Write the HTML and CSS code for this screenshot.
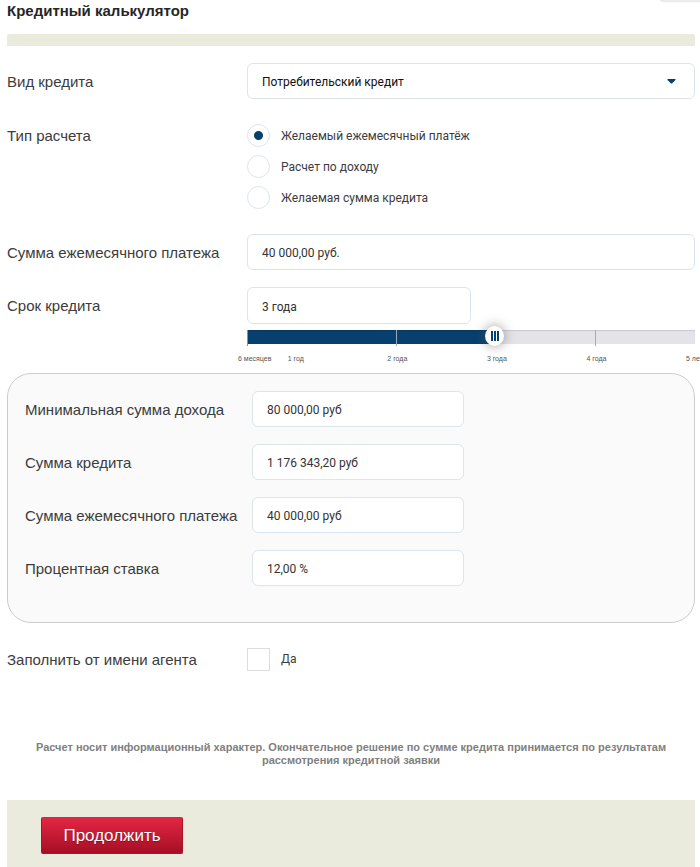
FILE: index.html
```html
<!DOCTYPE html>
<html lang="ru">
<head>
<meta charset="utf-8">
<meta name="viewport" content="width=device-width, initial-scale=1">
<title>Кредитный калькулятор</title>
<link rel="stylesheet" href="styles.css">
</head>
<body>
<div class="floating-edge"></div>
<form class="calculator">
  <h1 class="title">Кредитный калькулятор</h1>
  <div class="strip"></div>

  <div class="row row-kind">
    <label class="label" for="kind">Вид кредита</label>
    <div class="select-wrap">
      <select class="field" id="kind"><option>Потребительский кредит</option></select>
      <svg class="arrow" viewBox="0 0 8 5" aria-hidden="true"><path d="M0 0h8v1L4.500 4.500h-1L0 1z"/></svg>
    </div>
  </div>

  <div class="row row-type" role="radiogroup" aria-labelledby="type-label">
    <span class="label" id="type-label">Тип расчета</span>
    <div class="radios">
      <label class="choice"><input class="radio" type="radio" name="type" checked><span>Желаемый ежемесячный платёж</span></label>
      <label class="choice"><input class="radio" type="radio" name="type"><span>Расчет по доходу</span></label>
      <label class="choice"><input class="radio" type="radio" name="type"><span>Желаемая сумма кредита</span></label>
    </div>
  </div>

  <div class="row row-payment">
    <label class="label" for="payment">Сумма ежемесячного платежа</label>
    <input class="field" id="payment" type="text" value="40 000,00 руб.">
  </div>

  <div class="row row-term">
    <label class="label" for="term">Срок кредита</label>
    <div>
      <input class="field field-half" id="term" type="text" value="3 года">
      <div class="slider">
        <input class="range" type="range" min="6" max="60" value="36" aria-label="Срок кредита в месяцах">
        <div class="ticks"><i class="tick tick-start"></i><i class="tick tick-light"></i><i></i><i class="tick"></i></div>
        <svg class="grip" viewBox="0 0 8 10" aria-hidden="true"><path d="M0 0h2v10H0zM3 0h2v10H3zM6 0h2v10H6z"/></svg>
      </div>
      <div class="scale"><span>6 месяцев</span><span>1 год</span><span>2 года</span><span>3 года</span><span>4 года</span><span>5 лет</span></div>
    </div>
  </div>

  <section class="results">
    <div class="result"><label class="label" for="income">Минимальная сумма дохода</label><input class="field" id="income" type="text" value="80 000,00 руб" readonly></div>
    <div class="result"><label class="label" for="amount">Сумма кредита</label><input class="field" id="amount" type="text" value="1 176 343,20 руб" readonly></div>
    <div class="result"><label class="label" for="monthly">Сумма ежемесячного платежа</label><input class="field" id="monthly" type="text" value="40 000,00 руб" readonly></div>
    <div class="result"><label class="label" for="rate">Процентная ставка</label><input class="field" id="rate" type="text" value="12,00 %" readonly></div>
  </section>

  <div class="row row-agent">
    <span class="label" id="agent-label">Заполнить от имени агента</span>
    <label class="choice"><input class="checkbox" type="checkbox" aria-describedby="agent-label"><span>Да</span></label>
  </div>

  <p class="note">Расчет носит информационный характер. Окончательное решение по сумме кредита принимается по результатам рассмотрения кредитной заявки</p>

  <footer class="footer"><button class="submit" type="button">Продолжить</button></footer>
</form>
</body>
</html>
```
FILE: styles.css
```css
* { box-sizing: border-box; }

body {
  margin: 0;
  overflow-x: hidden;
  background: #fff;
  color: #3c3c3c;
  font-family: "Liberation Sans", Arial, sans-serif;
  font-size: 15px;
}

.floating-edge {
  position: absolute;
  top: -8px;
  right: -8px;
  width: 48px;
  height: 9px;
  border-radius: 4px;
  background: #eee;
  box-shadow: 0 0 2px #aaa;
}

.calculator { padding: 0 5px 0 7px; }

.title {
  margin: 0;
  padding-top: 2px;
  height: 34px;
  color: #262626;
  font-size: 15px;
  line-height: 18px;
}

.strip {
  height: 12px;
  border-radius: 3px 3px 0 0;
  background: #eaebdd;
}

.row {
  display: grid;
  grid-template-columns: 240px minmax(0, 1fr);
}

.label {
  height: 36px;
  line-height: 38px;
}

.row-kind { margin-top: 17px; }
.row-type { margin-top: 18px; }
.row-payment { margin-top: 18px; }
.row-term { margin-top: 17px; }

.field {
  display: block;
  width: 100%;
  height: 36px;
  margin: 0;
  padding: 2px 14px 0;
  border: 1px solid #dce4ec;
  border-radius: 6px;
  outline: 0;
  background: #fff;
  color: #333;
  font-family: Roboto, sans-serif;
  font-size: 12px;
}

.field-half { width: 50%; height: 37px; }

.select-wrap { position: relative; }
select.field { appearance: none; color: #111; }
.arrow {
  position: absolute;
  top: 16px;
  right: 19px;
  width: 9px;
  height: 5px;
  fill: #07406e;
  pointer-events: none;
}

.radios {
  display: grid;
  gap: 8px;
  padding: 7px 0;
}

.choice {
  display: flex;
  align-items: center;
  gap: 11px;
  font-family: Roboto, sans-serif;
  font-size: 12px;
}

.radio, .checkbox {
  appearance: none;
  width: 23px;
  height: 23px;
  margin: 0;
  border: 1px solid #dce4ec;
  background: #fff;
}
.radio { border-radius: 50%; }
.radio:checked { background: radial-gradient(circle, #07406e 4px, transparent 5px); }
.checkbox { border-color: #ddd; }
.checkbox:checked { background: #07406e; }

.slider {
  position: relative;
  height: 14px;
  margin-top: 6px;
}

.range {
  appearance: none;
  display: block;
  width: 100%;
  height: 14px;
  margin: 0;
  background: linear-gradient(90deg, #07406e 55%, #e4e3e8 55%);
  box-shadow: inset 0 1px 1px rgba(0, 0, 0, .12);
}
.range::-webkit-slider-thumb {
  appearance: none;
  width: 19px;
  height: 20px;
  margin-top: -2px;
  border-radius: 50%;
  background: #fff;
  box-shadow: 0 0 12px rgba(80, 80, 80, .6);
}

.ticks {
  position: absolute;
  inset: 0 0 -2px;
  display: grid;
  grid-template-columns: 3fr 2fr 2fr 2fr;
  pointer-events: none;
}
.ticks > :nth-child(3) { visibility: hidden; }
.tick { width: 1px; background: #aaa; }
.tick-start { background: #8293a3; }
.tick-light { background: #9aaab8; }

.grip {
  position: absolute;
  top: 1px;
  left: calc(55% - 2px);
  width: 8px;
  height: 10px;
  fill: #07406e;
  pointer-events: none;
}

.scale {
  display: grid;
  grid-template-columns: minmax(0, 1fr) repeat(4, minmax(0, 2fr)) 0;
  margin: 10px 0 0 -9px;
  padding-right: 9px;
  height: 19px;
  color: #555;
  font-size: 7px;
  line-height: 10px;
  white-space: nowrap;
}

.results {
  display: grid;
  gap: 17px;
  padding: 17px 17px 36px;
  border: 1px solid #ccc;
  border-radius: 24px;
  background: #fafafa;
}
.result {
  display: grid;
  grid-template-columns: 227px minmax(0, 212px);
}

.row-agent { margin-top: 18px; }

.note {
  margin: 64px 24px 0;
  color: #7f7f7f;
  font-size: 11px;
  font-weight: bold;
  line-height: 13px;
  text-align: center;
}

.footer {
  margin-top: 33px;
  padding: 17px 34px 13px;
  background: #eaebdd;
}

.submit {
  display: block;
  width: 142px;
  height: 37px;
  padding: 0;
  border: 1px solid #a91428;
  border-top-color: #cf2943;
  border-radius: 2px;
  background: linear-gradient(#e32644, #a50f25);
  color: #fff;
  font: 17px "Liberation Sans", Arial, sans-serif;
  text-shadow: 0 1px 1px rgba(0, 0, 0, .3);
}
```
